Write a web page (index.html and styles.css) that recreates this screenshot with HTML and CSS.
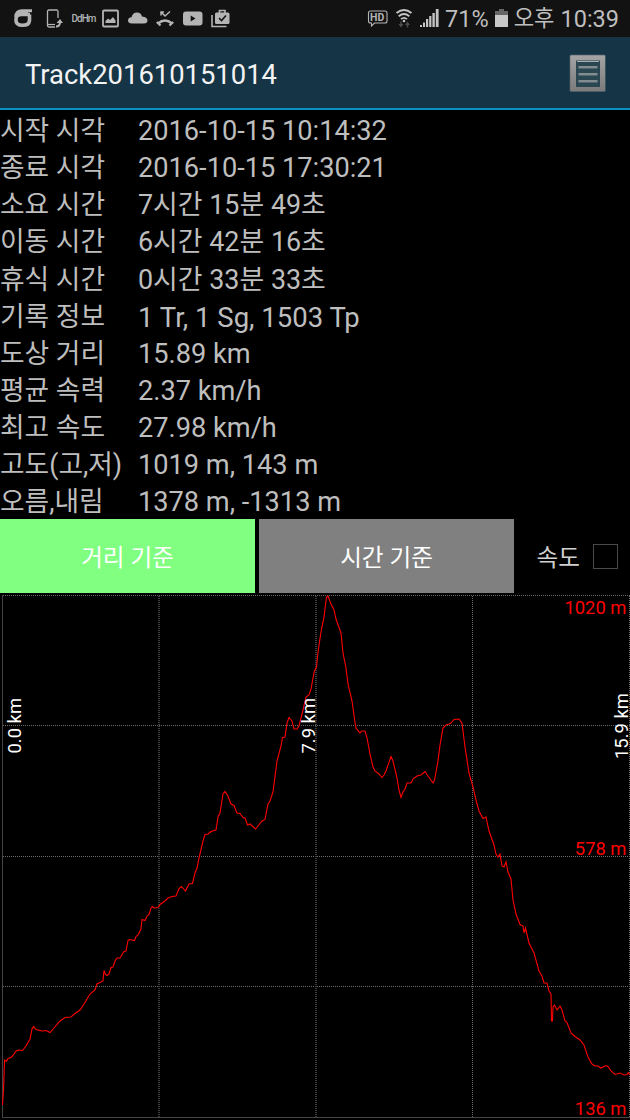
FILE: index.html
```
<!doctype html>
<html lang="ko">
<head>
<meta charset="UTF-8">
<meta name="viewport" content="width=device-width, initial-scale=1">
<title>Track201610151014</title>

<link rel="stylesheet" href="styles.css">
</head>

<body>
<div id="statusbar">
    <div class="status-icons">
        <svg width="20" height="20" viewBox="0 0 20 20">
            <path d="M17 5.500H8.500Q3 5.500 3 10V11.500Q3 16.300 9.500 16.300T16.500 11.500V5.500" fill="none" stroke="#b4b4b4" stroke-width="3.600"/>
            <path d="M1.200 8Q1.500 .2 9 .2H19V3.200H15V7H6Z" fill="#b4b4b4"/>
        </svg>
        <svg width="22" height="20" viewBox="0 0 22 20" fill="none" stroke="#b4b4b4">
            <path d="M17 9V2.500Q17 1 15.500 1H8Q6.500 1 6.500 2.500V16.500Q6.500 18 8 18H14" stroke-width="1.300"/>
            <path d="M7 15.500H14" stroke-width="1.200"/>
            <path d="M15 17.500Q19 17.500 19 13" stroke-width="2"/>
            <path d="M15.500 14L19 10L22 14Z" fill="#b4b4b4" stroke="none"/>
        </svg>
        <svg width="23" height="20" viewBox="0 0 23 20">
            <text class="ddhm" transform="translate(.5 12.500) scale(.900 1)">DdHm</text>
        </svg>
        <svg width="17" height="20" viewBox="0 0 17 20">
            <rect x="1" y="1.500" width="15" height="16" rx="1" fill="none" stroke="#b4b4b4" stroke-width="1.800"/>
            <path d="M3.500 14V12L6 9.500L8 11L11 8L13.500 11.500V14Z" fill="#b4b4b4"/>
        </svg>
        <svg width="21" height="20" viewBox="0 0 21 20" fill="#b4b4b4">
            <path d="M5 14.500Q1 14.500 1 11.500Q1 8.500 4.500 8.300Q5.500 3.500 10 3.500Q14 3.500 15 7.500Q20.500 8 20.500 11.500Q20.500 14.500 17 14.500Z"/>
        </svg>
        <svg width="18" height="20" viewBox="0 0 18 20" fill="none" stroke="#b4b4b4">
            <path d="M5 6.500V3H8M5.300 3.300L9 7L14 2.500" stroke-width="1.500"/>
            <path d="M2 14.500Q9 8.500 16 14.500" stroke-width="2.400"/>
            <path d="M.8 13L4.500 16.500M17.200 13L13.500 16.500" stroke-width="2.200"/>
        </svg>
        <svg width="21" height="20" viewBox="0 0 21 20">
            <rect x="1" y="2.500" width="19.500" height="14" rx="3" fill="#b4b4b4"/>
            <path d="M8.700 6.500V12.500L13.500 9.500Z" fill="#121212"/>
        </svg>
        <svg width="19" height="20" viewBox="0 0 19 20" fill="none">
            <path d="M1 6V17.500H15.500" stroke="#b4b4b4" stroke-width="1.600"/>
            <rect x="4" y="3.500" width="14.500" height="11.500" rx="1.500" fill="#b4b4b4"/>
            <path d="M8.500 4.500V1.500H14V4.500" stroke="#b4b4b4" stroke-width="1.700"/>
            <path d="M8 9L10.500 11.500L15 6.500" stroke="#121212" stroke-width="1.600"/>
        </svg>
    </div>
    <div class="status-info">
        <svg width="21" height="20" viewBox="0 0 21 20">
            <path d="M3.500 2H18Q20 2 20 4V12Q20 14 18 14H7.500L4.500 17V14H3.500Q1.500 14 1.500 12V4Q1.500 2 3.500 2Z" fill="none" stroke="#b4b4b4" stroke-width="1.100"/>
            <text class="hd" x="3" y="12">HD</text>
        </svg>
        <svg width="20" height="20" viewBox="0 0 20 20" fill="none" stroke="#c4c4c4" stroke-width="1.800">
            <path d="M2.500 4Q10 -2 17.500 4M4.700 7.200Q10 2.700 15.300 7.200M7 10.200Q10 7.500 13 10.200"/>
            <circle cx="10" cy="12" r="1.300" fill="#c4c4c4" stroke="none"/>
            <path d="M4.500 15H9.500L7 18.500ZM11 16H16L13.500 12.500Z" fill="#4c4c4c" stroke="none"/>
            <path d="M7 12.500V16M13.500 15V18.500" stroke="#4c4c4c" stroke-width="1.500"/>
        </svg>
        <svg width="19" height="20" viewBox="0 0 19 20" fill="#c4c4c4">
            <rect x="0" y="16" width="2" height="2"/>
            <rect x="3" y="13.500" width="2" height="4.500"/>
            <rect x="6" y="10" width="2.200" height="8"/>
            <rect x="9.200" y="7" width="2.200" height="11"/>
            <rect x="12.400" y="4" width="2.400" height="14"/>
            <rect x="15.800" y="0" width="2.800" height="18"/>
        </svg>
        <span>71%</span>
        <svg width="13" height="20" viewBox="0 0 13 20">
            <path d="M0 2H4V0H9V2H13V6H0Z" fill="#666"/>
            <rect x="0" y="6" width="13" height="12" fill="#c8c8c8"/>
        </svg>
        <span class="ampm">오후</span>
        <span>10:39</span>
    </div>
</div>

<div id="actionbar">
    <h1>Track201610151014</h1>
    <svg width="40" height="40" viewBox="0 0 40 40">
        <defs>
            <linearGradient id="metal" x1="0" y1="0" x2="0" y2="1">
                <stop offset="0" stop-color="#a4a4a4"/>
                <stop offset="1" stop-color="#7b7b7b"/>
            </linearGradient>
        </defs>
        <rect x="1.500" y="1.500" width="36.500" height="37.500" rx="1.500" fill="#3c5360"/>
        <rect x="2.200" y="2.200" width="34.800" height="36" rx="1" fill="url(#metal)"/>
        <rect x="8" y="7.500" width="24" height="26.500" fill="#294651"/>
        <path d="M9 8.500H31" stroke="#a4b0b5" stroke-width="1"/>
        <path d="M10.500 14H29.500M10.500 21H29.500M10.500 28H29.500" stroke="#a0a5a8" stroke-width="1.600"/>
        <path d="M10.500 15.500H29.500M10.500 22.500H29.500M10.500 29.500H29.500" stroke="#536771" stroke-width="1"/>
    </svg>
</div>

<div id="stats">
    <div class="label">시작 시각</div><div>2016-10-15 10:14:32</div>
    <div class="label">종료 시각</div><div>2016-10-15 17:30:21</div>
    <div class="label">소요 시간</div><div class="duration">7시간 15분 49초</div>
    <div class="label">이동 시간</div><div class="duration">6시간 42분 16초</div>
    <div class="label">휴식 시간</div><div class="duration">0시간 33분 33초</div>
    <div class="label">기록 정보</div><div class="points">1 Tr, 1 Sg, 1503 Tp</div>
    <div class="label">도상 거리</div><div>15.89 km</div>
    <div class="label">평균 속력</div><div>2.37 km/h</div>
    <div class="label">최고 속도</div><div>27.98 km/h</div>
    <div class="label">고도(고,저)</div><div>1019 m, 143 m</div>
    <div class="label">오름,내림</div><div>1378 m, -1313 m</div>
</div>

<div id="controls">
    <button class="mode active">거리 기준</button>
    <button class="mode">시간 기준</button>
    <label class="speed">속도 <input type="checkbox"></label>
</div>

<svg id="chart" width="630" height="527" viewBox="0 593 630 527">
    <!-- Grid -->
    <g class="grid">
        <path d="M3 595.5H630M3 725.5H630M3 856.5H630M3 986.5H630"/>
        <path class="soft" d="M159 596V1117M316 596V1117"/>
        <path d="M472.5 596V1117M629.5 596V1117"/>
    </g>
    <path class="axis" d="M2.500 595V1117.500H630"/>

    <!-- Elevation by distance -->
    <polyline class="track" points="2.500,1105 3.500,1090 4.500,1060 6.500,1061.500 8,1058.500 11,1057.500 13,1055.500 16,1051 19,1050 22.500,1050.500 26,1046 30,1039 32,1029 33.500,1026.500 36,1029.500 42,1031 46,1030.500 50,1032.500 54,1028 60,1021 65,1017.500 71,1017 75,1013.500 80,1010 84,1004 90,994 95,990 97,984 103,981 104,970.500 105.500,974.500 107,975.500 109,974 111,967.500 113,967 115,961 117,958 120,958 124,951.500 126,951 128,940.500 129.500,939.500 134.500,940.500 136,936.500 138,935 141,929 142,919.500 145,920.500 147,916 149,914.500 151,908 152.500,906.500 154,908 158,907.500 160,904.500 165,901 168,898 172,896.500 176,896 179,888.500 181.500,886.500 185.500,891 189,884 192.500,883.500 195,873 197,868 199,858 203,841 205,834.500 208,834 211,831.500 216,830 218,817 220,813 223,794 225,791.500 228,796 231,804 234,805.500 237,813 240,813.500 243,817.500 245,818 247.500,825 250,824 255.500,829 258,826 262,821 265,819.500 268,804 270,801 273,792 277,761 281,746 282.500,737.500 285,737 287,723 289,717.500 292,721 294,729 297,729 299,726 303,710 306,697 309,695 311,689 313,678 314.500,671 316.500,667 318,652 321,632 324,617 326.500,597 328,596 331,604 334,610 336,619 341,633 343,653 346,668 348,684 352,701 354.500,719 356,728 360,733 361.500,731 365,731 367,738 370,754 373,767 375,771 379,774 382,777.500 384,775 386,771 391,756.500 393,761 397,778 399,790 401,797.500 403,792 405,789 407,783 411,783 413,779 417,776 421,775 425,771.500 428,776 433,783 434.500,780 438,761 440,745 443,728 446,725 449,724 451,723 454,719.500 459,719 462,723 465,747 469,773 473,787 476,800 479,811 483,818.500 486,817 489,831 494,845 496,854 498,857 500,854 502,866 504,867 506,862 508,872 511,879 513,900 516,914 520,924.500 523,926 524,933 525.500,928 529,943 534,953 539,971 542,976 544,983 547,983 549,991 551,994 551.500,1021 552.500,1021 553,1007 554.500,1005 557,1010 560,1006 562,1010 565,1021 567,1022.500 571,1033 575,1036.500 580,1040 584,1045 588,1057 592,1064 595,1066 598,1066 601,1068 606,1065.500 608,1066.500 611,1071 615,1074.500 620,1073 624,1075 627,1074.500 628.500,1072.500 629.500,1075"/>

    <!-- Elevation labels -->
    <g class="elevation">
        <text x="626.500" y="614">1020 m</text>
        <text x="626.500" y="855">578 m</text>
        <text x="626.500" y="1115">136 m</text>
    </g>

    <!-- Distance labels -->
    <g class="distance">
        <text transform="translate(20.500 753.500) rotate(-90)">0.0 km</text>
        <text transform="translate(315 753.500) rotate(-90)">7.9 km</text>
        <text transform="translate(628 759) rotate(-90)">15.9 km</text>
    </g>
</svg>
</body>
</html>
```
FILE: styles.css
```
body {
    margin: 0;
    padding: 0;
    width: 630px;
    background: #000;
    color: #bebebe;
    font-family: Roboto, "Noto Sans CJK KR", sans-serif;
    overflow: hidden;
}

svg {
    display: block;
    flex-shrink: 0;
    overflow: visible;
}

#statusbar {
    display: flex;
    justify-content: space-between;
    align-items: center;
    height: 37px;
    padding: 0 11px 0 13px;
    box-sizing: border-box;
    background: #121212;
    color: #bebebe;
    font-size: 23.5px;
    line-height: 38px;
    white-space: nowrap;
}

.status-icons {
    display: flex;
    gap: 8px;
}

.status-info {
    display: flex;
    align-items: center;
    gap: 6px;
}

.ampm {
    font-size: 22.2px;
    line-height: 41px;
}

.ddhm {
    font-size: 11px;
    font-weight: 500;
    letter-spacing: -1px;
    fill: #b4b4b4;
}

.hd {
    font-size: 10.5px;
    font-weight: bold;
    fill: #b4b4b4;
}

#actionbar {
    display: flex;
    justify-content: space-between;
    align-items: center;
    height: 73px;
    padding: 0 22px 0 25px;
    box-sizing: border-box;
    background: #153445;
    border-bottom: 2px solid #0d90c6;
}

#actionbar h1 {
    margin: 4px 0 0;
    color: #f3f3f3;
    font-size: 27.4px;
    font-weight: normal;
}

#stats {
    display: grid;
    grid-template-columns: 138px 1fr;
    grid-auto-rows: 37.15px;
    height: 409px;
    font-size: 27.2px;
    line-height: 43px;
    white-space: nowrap;
}

#stats .label {
    font-size: 26.75px;
}

#stats .duration {
    font-size: 26.9px;
}

#stats .points {
    font-size: 27.5px;
}

#controls {
    display: flex;
    gap: 4px;
    height: 74px;
}

.mode {
    width: 255px;
    padding: 0;
    border: 0;
    background: #808080;
    color: #fff;
    font-family: inherit;
    font-size: 23.6px;
}

.mode.active {
    background: #80ff80;
}

.speed {
    display: flex;
    flex: 1;
    align-items: center;
    justify-content: flex-end;
    gap: 13px;
    padding-right: 12px;
    color: #d0d0d0;
    font-size: 23.6px;
}

.speed input {
    appearance: none;
    width: 25px;
    height: 25px;
    margin: 0;
    border: 1px solid #4a4a4a;
}

.grid path {
    fill: none;
    stroke: #6a6a6a;
    stroke-width: 1;
    stroke-dasharray: 1 1;
}

.grid .soft {
    stroke: #3e3e3e;
    stroke-width: 2;
}

.axis {
    fill: none;
    stroke: #444;
}

.track {
    fill: none;
    stroke: #f00;
    stroke-width: 1.1;
}

.elevation {
    font-size: 18.4px;
    fill: #f00;
    text-anchor: end;
}

.distance {
    font-size: 18.4px;
    fill: #fff;
}
```
